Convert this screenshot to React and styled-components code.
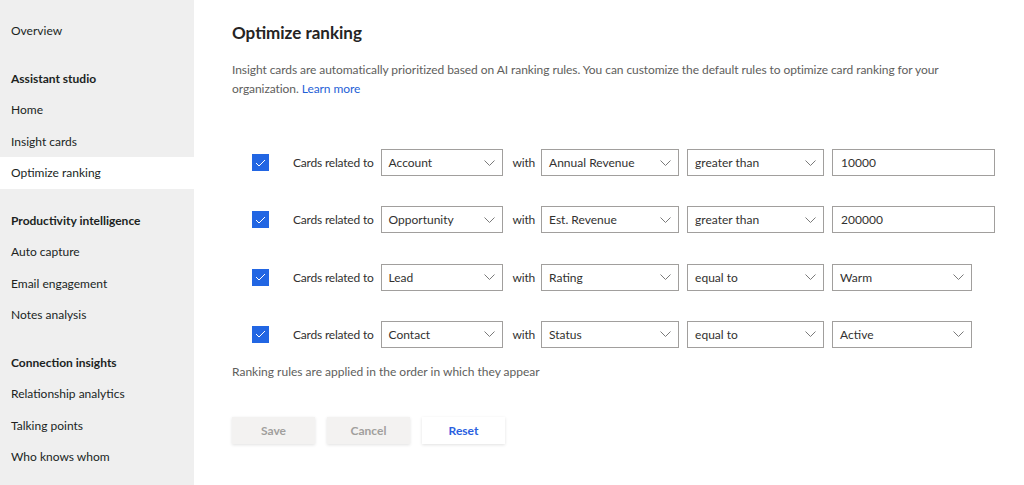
import React from "react";
import styled, { createGlobalStyle } from "styled-components";

const GlobalStyle = createGlobalStyle`
  html, body {
    margin: 0;
    padding: 0;
    background: #ffffff;
    font-family: "Segoe UI", Lato, "Noto Sans", sans-serif;
    color: #252423;
  }
`;

const navGroups = [
  { items: ["Overview"] },
  {
    title: "Assistant studio",
    items: ["Home", "Insight cards", "Optimize ranking"],
  },
  {
    title: "Productivity intelligence",
    items: ["Auto capture", "Email engagement", "Notes analysis"],
  },
  {
    title: "Connection insights",
    items: ["Relationship analytics", "Talking points", "Who knows whom"],
  },
];

const rules = [
  { entity: "Account", field: "Annual Revenue", op: "greater than", value: "10000", input: true },
  { entity: "Opportunity", field: "Est. Revenue", op: "greater than", value: "200000", input: true },
  { entity: "Lead", field: "Rating", op: "equal to", value: "Warm" },
  { entity: "Contact", field: "Status", op: "equal to", value: "Active" },
];

function Chevron() {
  return (
    <svg width="11" height="6" viewBox="0 0 11 6" fill="none">
      <path d="M0.5 0.5 L5.5 5.5 L10.5 0.5" stroke="#7a7a7a" strokeWidth="1" />
    </svg>
  );
}

function Select({ width, children }) {
  return (
    <SelectBox $width={width}>
      <span>{children}</span>
      <Chevron />
    </SelectBox>
  );
}

function App() {
  return (
    <>
      <GlobalStyle />
      <Page>
        <Sidebar>
          {navGroups.map((group, gi) => (
            <NavGroup key={gi}>
              {group.title && <NavItem $header>{group.title}</NavItem>}
              {group.items.map((item) => (
                <NavItem key={item} $active={item === "Optimize ranking"}>
                  {item}
                </NavItem>
              ))}
            </NavGroup>
          ))}
        </Sidebar>

        <Main>
          <Title>Optimize ranking</Title>
          <Description>
            Insight cards are automatically prioritized based on AI ranking rules. You can
            customize the default rules to optimize card ranking for your organization.{" "}
            <Link>Learn more</Link>
          </Description>

          <Rules>
            {rules.map((rule) => (
              <RuleRow key={rule.entity}>
                <Checkbox>
                  <svg width="11" height="8" viewBox="0 0 11 8" fill="none">
                    <path d="M1 4 L4 7 L10 1" stroke="#ffffff" strokeWidth="1" />
                  </svg>
                </Checkbox>
                <Label $gap="7px">Cards related to</Label>
                <Select width="122px">{rule.entity}</Select>
                <Label $gap="6px" $left="10px">with</Label>
                <Select width="138px">{rule.field}</Select>
                <Spacer />
                <Select width="137px">{rule.op}</Select>
                <Spacer />
                {rule.input ? (
                  <TextInput>{rule.value}</TextInput>
                ) : (
                  <Select width="140px">{rule.value}</Select>
                )}
              </RuleRow>
            ))}
          </Rules>

          <Note>Ranking rules are applied in the order in which they appear</Note>

          <Actions>
            <Button disabled>Save</Button>
            <Button disabled>Cancel</Button>
            <Button $primary>Reset</Button>
          </Actions>
        </Main>
      </Page>
    </>
  );
}

export default App;

const Page = styled.div`
  display: flex;
  height: 485px;
  overflow: hidden;
`;

const Sidebar = styled.nav`
  width: 194px;
  flex-shrink: 0;
  background: #efefef;
  padding-top: 15px;
  box-sizing: border-box;
`;

const NavGroup = styled.div`
  & + & {
    margin-top: 16px;
  }
`;

const NavItem = styled.div`
  height: 31.5px;
  display: flex;
  align-items: center;
  padding-left: 11px;
  font-size: 12px;
  font-weight: ${({ $header }) => ($header ? 700 : 400)};
  color: #201f1e;
  background: ${({ $active }) => ($active ? "#ffffff" : "transparent")};
`;

const Main = styled.main`
  flex: 1;
  padding: 22px 0 0 38px;
`;

const Title = styled.h1`
  margin: 0;
  font-size: 17px;
  font-weight: 700;
  color: #252423;
  line-height: 22px;
`;

const Description = styled.p`
  margin: 16px 0 0;
  width: 716px;
  font-size: 12px;
  letter-spacing: -0.07px;
  line-height: 19px;
  color: #605e5c;
`;

const Link = styled.span`
  color: #1f5fd6;
  cursor: pointer;
`;

const Rules = styled.div`
  margin-top: 51px;
  padding-left: 20px;
  display: flex;
  flex-direction: column;
  gap: 30.3px;
`;

const RuleRow = styled.div`
  display: flex;
  align-items: center;
  height: 27px;
`;

const Checkbox = styled.span`
  width: 17px;
  height: 17px;
  background: #2266e3;
  display: inline-flex;
  align-items: center;
  justify-content: center;
  margin-right: 24px;
  flex-shrink: 0;
`;

const Label = styled.span`
  font-size: 12px;
  letter-spacing: -0.2px;
  color: #323130;
  margin-right: ${({ $gap }) => $gap};
  margin-left: ${({ $left }) => $left || 0};
  white-space: nowrap;
`;

const SelectBox = styled.div`
  width: ${({ $width }) => $width};
  height: 27px;
  box-sizing: border-box;
  border: 1px solid #a19f9d;
  display: flex;
  align-items: center;
  justify-content: space-between;
  padding: 0 7px 0 7px;
  font-size: 12px;
  color: #323130;
  flex-shrink: 0;
`;

const TextInput = styled.div`
  width: 163px;
  height: 27px;
  box-sizing: border-box;
  border: 1px solid #a19f9d;
  display: flex;
  align-items: center;
  padding-left: 8px;
  font-size: 12px;
  color: #323130;
  flex-shrink: 0;
`;

const Spacer = styled.span`
  width: 8px;
  flex-shrink: 0;
`;

const Note = styled.p`
  margin: 16px 0 0;
  font-size: 12px;
  color: #605e5c;
`;

const Actions = styled.div`
  display: flex;
  gap: 12px;
  margin-top: 38px;
`;

const Button = styled.button`
  width: 83px;
  height: 27px;
  border: none;
  font-family: inherit;
  font-size: 12px;
  font-weight: 700;
  background: ${({ $primary }) => ($primary ? "#ffffff" : "#f3f2f1")};
  color: ${({ $primary }) => ($primary ? "#2b5fe0" : "#a19f9d")};
  box-shadow: 0 1px 3px rgba(0, 0, 0, 0.12);
  cursor: ${({ disabled }) => (disabled ? "default" : "pointer")};
`;
